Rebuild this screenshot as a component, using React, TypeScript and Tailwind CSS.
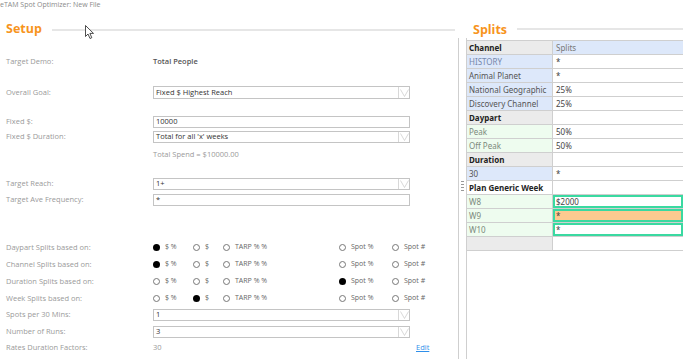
import React from 'react';

const LABEL = 'text-[7.5px] text-[#9a9a9a]';
const VAL = 'text-[7.5px] text-[#333]';

function Arrow() {
  return (
    <div className="flex h-full w-[11px] items-center justify-center border-l border-[#d8d8d8]">
      <svg width="9" height="8" viewBox="0 0 9 8">
        <polyline points="0.5,0.5 4.5,7.5 8.5,0.5" fill="none" stroke="#cfcfcf" strokeWidth="0.8" />
      </svg>
    </div>
  );
}

function Box({ value, select, h = 'h-[12px]' }: { value: string; select?: boolean; h?: string }) {
  return (
    <div className={`flex ${h} w-[257px] items-center border border-[#c4c4c4] bg-white`}>
      <span className={`${VAL} flex-1 pl-[2px] leading-none`}>{value}</span>
      {select && <Arrow />}
    </div>
  );
}

function Radio({ on }: { on?: boolean }) {
  return on ? (
    <span className="inline-block h-[7px] w-[7px] rounded-full bg-black" />
  ) : (
    <span className="inline-block h-[7px] w-[7px] rounded-full border border-[#777] bg-white" />
  );
}

function Row({ label, children, mt, h = 'h-[12px]' }: { label: string; children?: React.ReactNode; mt: string; h?: string }) {
  return (
    <div className={`flex ${h} ${mt} items-center`}>
      <span className={`${LABEL} w-[153px] shrink-0 pl-[6px]`}>{label}</span>
      {children}
    </div>
  );
}

function RadioLine({ label, sel }: { label: string; sel: number }) {
  const opts: [string, string][] = [
    ['$ %', 'w-[40px]'],
    ['$', 'w-[30px]'],
    ['TARP % %', 'w-[116px]'],
    ['Spot %', 'w-[53px]'],
    ['Spot #', 'w-[40px]'],
  ];
  return (
    <div className="flex h-[17px] items-center">
      <span className={`${LABEL} w-[153px] shrink-0 pl-[6px]`}>{label}</span>
      {opts.map(([t, w], i) => (
        <div key={t} className={`flex ${w} shrink-0 items-center`}>
          <Radio on={sel === i} />
          <span className="ml-[5px] text-[7px] text-[#666]">{t}</span>
        </div>
      ))}
    </div>
  );
}

type Cell = { a: string; b: string; kind: 'head' | 'blue' | 'green' | 'white' | 'empty'; aText?: string; hl?: 'box' | 'orange' };

const GRID: Cell[] = [
  { a: 'Channel', b: 'Splits', kind: 'head' },
  { a: 'HISTORY', b: '*', kind: 'blue', aText: 'text-[#7587ab]' },
  { a: 'Animal Planet', b: '*', kind: 'blue' },
  { a: 'National Geographic', b: '25%', kind: 'blue' },
  { a: 'Discovery Channel', b: '25%', kind: 'blue' },
  { a: 'Daypart', b: '', kind: 'head' },
  { a: 'Peak', b: '50%', kind: 'green' },
  { a: 'Off Peak', b: '50%', kind: 'green' },
  { a: 'Duration', b: '', kind: 'head' },
  { a: '30', b: '*', kind: 'blue' },
  { a: 'Plan Generic Week', b: '', kind: 'white' },
  { a: 'W8', b: '$2000', kind: 'green', hl: 'box' },
  { a: 'W9', b: '*', kind: 'green', hl: 'orange' },
  { a: 'W10', b: '*', kind: 'green', hl: 'box' },
  { a: '', b: '', kind: 'empty' },
];

function GridRow({ c }: { c: Cell }) {
  const bold = c.kind === 'head' || c.kind === 'white';
  const aBg =
    c.kind === 'blue' ? 'bg-[#dde8fa]' : c.kind === 'green' ? 'bg-[#eefcef]' : c.kind === 'white' ? 'bg-white' : 'bg-[#ebebeb]';
  const aColor = c.aText ?? (bold ? 'text-[#222] font-bold' : c.kind === 'green' ? 'text-[#7c8a7c]' : 'text-[#555]');
  const bBg = c.kind === 'head' && c.b ? 'bg-[#dde8fa]' : c.hl === 'orange' ? 'bg-[#fdca90]' : 'bg-white';
  const bColor = c.kind === 'head' ? 'text-[#777]' : 'text-[#444]';
  const ring = c.hl ? 'border-2 border-[#3ad9a1]' : '';
  return (
    <div className="flex h-[14px] border-b border-[#cfcfcf]">
      <div className={`flex w-[86px] items-center border-r border-[#cfcfcf] pl-[2px] ${aBg}`}>
        <span className={`text-[8px] leading-none ${aColor}`}>{c.a}</span>
      </div>
      <div className={`flex flex-1 items-center ${bBg} ${ring} ${c.hl ? 'pl-[1px]' : 'pl-[3px]'}`}>
        <span className={`text-[8px] leading-none ${bColor}`}>{c.b}</span>
      </div>
    </div>
  );
}

export default function App() {
  return (
    <div className="relative h-[359px] w-[683px] overflow-hidden bg-white" style={{ fontFamily: '"Open Sans", "Noto Sans", sans-serif' }}>
      <div className="flex h-[11px] items-center text-[7px] text-[#8a8a8a]">eTAM Spot Optimizer: New File</div>
      <div className="mt-[5px] flex">
        {/* Setup panel */}
        <div className="w-[458px] shrink-0">
          <div className="flex h-[27px] items-center pl-[6px]">
            <span className="text-[12.5px] font-bold text-[#f7941d]">Setup</span>
            <div className="ml-[10px] mr-[3px] h-[2px] flex-1 bg-[#e6e6e6]" />
          </div>
          <Row label="Target Demo:" mt="mt-[12px]" h="h-[13px]">
            <span className="text-[7.5px] font-semibold text-[#555]">Total People</span>
          </Row>
          <Row label="Overall Goal:" mt="mt-[18px]" h="h-[13px]">
            <Box value="Fixed $ Highest Reach" select h="h-[13px]" />
          </Row>
          <Row label="Fixed $:" mt="mt-[17px]">
            <Box value="10000" />
          </Row>
          <Row label="Fixed $ Duration:" mt="mt-[3px]">
            <Box value="Total for all 'x' weeks" select />
          </Row>
          <Row label="" mt="mt-[6px]">
            <span className="text-[7.5px] text-[#9a9a9a]">Total Spend = $10000.00</span>
          </Row>
          <Row label="Target Reach:" mt="mt-[17px]">
            <Box value="1+" select />
          </Row>
          <Row label="Target Ave Frequency:" mt="mt-[4px]">
            <Box value="*" />
          </Row>
          <div className="mt-[33px]">
            <RadioLine label="Daypart Splits based on:" sel={0} />
            <RadioLine label="Channel Splits based on:" sel={0} />
            <RadioLine label="Duration Splits based on:" sel={3} />
            <RadioLine label="Week Splits based on:" sel={1} />
          </div>
          <Row label="Spots per 30 Mins:" mt="mt-[2px]">
            <Box value="1" select />
          </Row>
          <Row label="Number of Runs:" mt="mt-[5px]">
            <Box value="3" select />
          </Row>
          <Row label="Rates Duration Factors:" mt="mt-[4px]">
            <span className="w-[263px] text-[7.5px] text-[#9a9a9a]">30</span>
            <span className="text-[7.5px] text-[#2f8fea] underline">Edit</span>
          </Row>
        </div>

        {/* Splits panel */}
        <div className="flex-1">
          <div className="flex h-[22px] items-end">
            <span className="ml-[15px] text-[12.5px] font-bold leading-[17px] text-[#f7941d]">Splits</span>
            <div className="mb-[8px] ml-[10px] h-[2px] flex-1 bg-[#e6e6e6]" />
          </div>
          <div className="h-[326px] border-l border-[#cfcfcf] pl-[7px]">
            <div className="h-full border-l border-[#cfcfcf] pt-[2px]" style={{ fontFamily: '"Noto Sans", "Open Sans", sans-serif' }}>
              <div className="border-t border-[#cfcfcf]">
                {GRID.map((c, i) => (
                  <GridRow key={i} c={c} />
                ))}
              </div>
            </div>
          </div>
        </div>
      </div>

      {/* drag handle */}
      <div className="absolute left-[461px] top-[181px] flex flex-col gap-[2px]">
        {[0, 1, 2, 3].map((i) => (
          <span key={i} className="block h-[1px] w-[3px] bg-[#999]" />
        ))}
      </div>

      {/* mouse cursor */}
      <svg className="absolute left-[85px] top-[25px]" width="10" height="15" viewBox="0 0 10 15">
        <path d="M0.5,0.5 L0.5,11.5 L3,9 L5,13.5 L6.8,12.7 L4.9,8.4 L8.5,8.4 Z" fill="white" stroke="#222" strokeWidth="0.8" />
      </svg>
    </div>
  );
}
